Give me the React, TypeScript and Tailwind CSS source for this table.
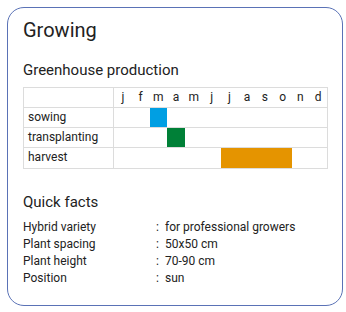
const months = ['j', 'f', 'm', 'a', 'm', 'j', 'j', 'a', 's', 'o', 'n', 'd'];

// start month index, length, colour class
const rows: { label: string; start: number; span: number; color: string }[] = [
  { label: 'sowing', start: 2, span: 1, color: 'bg-[#009fe3]' },
  { label: 'transplanting', start: 3, span: 1, color: 'bg-[#008037]' },
  { label: 'harvest', start: 6, span: 4, color: 'bg-[#e59400]' },
];

const facts = [
  ['Hybrid variety', 'for professional growers'],
  ['Plant spacing', '50x50 cm'],
  ['Plant height', '70-90 cm'],
  ['Position', 'sun'],
];

export default function App() {
  return (
    <div className="w-[346px] h-[312px] bg-white p-[7px] font-['Roboto',sans-serif] text-[#222]">
      <div className="w-[336px] h-[299px] rounded-[17px] border border-[#5a72b6] px-[15px] pt-[10px]">
        <h2 className="text-[20px] leading-[24px]">Growing</h2>

        <h3 className="mt-[18px] text-[15px] leading-[20px]">Greenhouse production</h3>

        {/* Growing calendar */}
        <div className="mt-[7px] w-[305px] border border-[#dcdcdc] text-[12px]">
          <div className="flex h-[20px] border-b border-[#dcdcdc]">
            <div className="w-[90px] border-r border-[#dcdcdc]" />
            <div className="grid flex-1 grid-cols-12">
              {months.map((m, i) => (
                <span key={i} className="text-center leading-[19px]">
                  {m}
                </span>
              ))}
            </div>
          </div>
          {rows.map((row, idx) => (
            <div
              key={row.label}
              className={`flex h-[20px] ${idx < rows.length - 1 ? 'border-b border-[#dcdcdc]' : ''}`}
            >
              <div className="w-[90px] border-r border-[#dcdcdc] pl-[4px] leading-[19px]">{row.label}</div>
              <div className="grid flex-1 grid-cols-12">
                {months.map((_, i) => (
                  <div
                    key={i}
                    className={i >= row.start && i < row.start + row.span ? row.color : ''}
                  />
                ))}
              </div>
            </div>
          ))}
        </div>

        <h3 className="mt-[23px] text-[15px] leading-[20px]">Quick facts</h3>

        <div className="mt-[7px] text-[12px] leading-[17px]">
          {facts.map(([k, v]) => (
            <div key={k} className="flex">
              <span className="w-[133px]">{k}</span>
              <span className="w-[9px]">:</span>
              <span>{v}</span>
            </div>
          ))}
        </div>
      </div>
    </div>
  );
}
